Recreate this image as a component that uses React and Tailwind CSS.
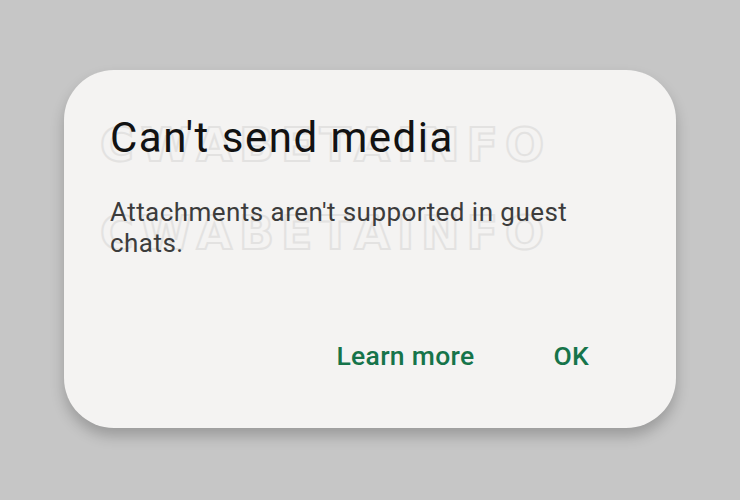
export default function App() {
  const wm = "absolute left-[36px] font-bold text-transparent [-webkit-text-stroke:2px_#e3e2e1] tracking-[7px] leading-none text-[46px] [font-family:'DejaVu_Sans',sans-serif] select-none";
  return (
    <div className="w-[740px] h-[500px] bg-[#c6c6c6] pt-[70px] pl-[64px]">
      <div className="relative w-[612px] h-[358px] bg-[#f4f3f2] rounded-[50px] shadow-[0_8px_14px_rgba(0,0,0,0.22)] flex flex-col pl-[46px] pr-[40px] [font-family:Roboto,'Noto_Sans',sans-serif]">
        <div className={wm + " top-[52px]"}>CWABETAINFO</div>
        <div className={wm + " top-[140px]"}>CWABETAINFO</div>
        <h1 className="relative mt-[44px] text-[42px] leading-[48px] tracking-[1.5px] text-[#121212]">Can't send media</h1>
        <p className="relative mt-[35px] text-[26px] leading-[31px] tracking-[0.45px] text-[#3c3c3c] w-[490px]">Attachments aren't supported in guest chats.</p>
        <div className="relative mt-auto mb-[52px] flex justify-end items-center gap-[79px] pr-[47px] text-[26.5px] font-medium text-[#16744a] tracking-[0.3px]">
          <span>Learn more</span>
          <span>OK</span>
        </div>
      </div>
    </div>
  );
}
